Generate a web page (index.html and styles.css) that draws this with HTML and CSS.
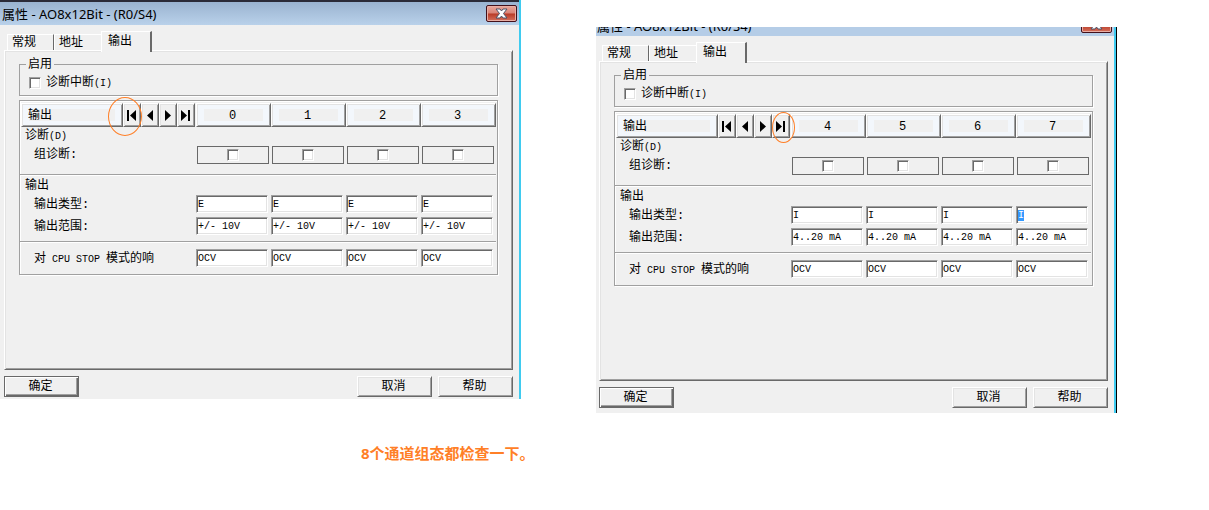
FILE: index.html
```
<!DOCTYPE html>
<html lang="zh-CN">
<head>
  <meta charset="UTF-8">
  <title>AO8x12Bit</title>
  <link rel="stylesheet" href="styles.css">
</head>
<body>

  <main class="dialogs">
    <section class="dialog" id="firstDialog"></section>
    <section class="dialog cropped" id="secondDialog"></section>
  </main>

  <p class="note">8个通道组态都检查一下。</p>

  <script src="script.js"></script>
</body>
</html>
```
FILE: styles.css
```
* {
  box-sizing: border-box;
}
body {
  margin: 0;
  background: #fff;
  color: #000;
  font-family: "Liberation Mono", "Noto Sans CJK SC", monospace;
  font-size: 12px;
  line-height: 16px;
}
button, input {
  margin: 0;
  padding: 0;
  color: inherit;
  font: inherit;
}
.latin {
  font-size: 10px;
}

/* dialogs */
.dialogs {
  display: grid;
  grid-template-columns: 1fr 1fr;
  align-items: start;
  gap: 75px;
  padding-right: 92px;
}
.dialog {
  min-width: 0;
  background: #f0f0f0;
  box-shadow: inset -2px 0 0 #3fcbf0;
}
.title {
  display: flex;
  justify-content: space-between;
  align-items: center;
  height: 25px;
  margin-right: 2px;
  padding: 0 2px;
  border-top: 2px solid #2b2b38;
  background: linear-gradient(#9ab3d0, #b9d1ea);
}
.title h1 {
  margin: 0;
  font: 13px/22px "Noto Sans", "Noto Sans CJK SC", sans-serif;
}
.close {
  display: flex;
  justify-content: center;
  align-items: center;
  flex: none;
  width: 31px;
  height: 17px;
  border: 1px solid #43101a;
  border-radius: 2px;
  background: linear-gradient(#e9a79c, #d98376 48%, #b93a26 52%, #d4705c);
  box-shadow: inset 0 0 0 1px #e8aea5;
}
.content {
  padding: 6px 8px 2px 4px;
}

/* second window is cut off at the top */
.cropped {
  margin-top: 27px;
  border-right: 1px solid #000;
}
.cropped .title {
  align-items: flex-end;
  height: 9px;
  padding-left: 1px;
  border-top: 0;
  background: #b5cde7;
  overflow: hidden;
}
.cropped .title h1 {
  line-height: 20px;
}
.cropped .close {
  margin-bottom: 3px;
}
.cropped .content {
  padding: 6px 8px 5px 3px;
}

/* tabs */
.tabs {
  display: flex;
  align-items: flex-end;
  height: 19px;
  padding-left: 3px;
}
.tabs button {
  width: 47px;
  height: 16px;
  padding-left: 4px;
  border: 1px solid #fff;
  border-right: 1px solid #696969;
  border-bottom: 0;
  background: #f0f0f0;
  text-align: left;
  line-height: 16px;
}
.tabs button:nth-child(2) {
  border-right: 0;
}
.tabs .active {
  position: relative;
  width: 51px;
  height: 21px;
  margin-bottom: -2px;
  padding: 0 0 1px 6px;
  border-right: 2px solid #696969;
}
.panel {
  padding: 6px 14px 94px;
  border: 1px solid #fff;
  border-right-color: #696969;
  border-bottom-color: #696969;
  box-shadow: inset 1px 1px 0 #e3e3e3, inset -1px -1px 0 #a0a0a0;
}

/* enable group */
fieldset {
  position: relative;
  min-width: 0;
  margin: 0 0 4px;
  padding: 0 6px;
  border: 1px solid #a0a0a0;
  box-shadow: 1px 1px 0 #fff;
}
legend {
  height: 14px;
  padding: 0 2px;
  line-height: 16px;
}
.enable {
  display: flex;
  align-items: center;
  gap: 5px;
  height: 24px;
  padding-left: 3px;
}
.enable span {
  line-height: 18px;
}
input[type="checkbox"] {
  appearance: none;
  flex: none;
  width: 12px;
  height: 12px;
  border: 1px solid #a0a0a0;
  border-right-color: #fff;
  border-bottom-color: #fff;
  background: #fff;
  box-shadow: inset 1px 1px 0 #696969, inset -1px -1px 0 #e3e3e3;
}

/* channel table */
.channels {
  padding-right: 1px;
  border: 1px solid #a0a0a0;
  box-shadow: inset 1px 1px 0 #fff, 1px 1px 0 #fff;
}
table {
  width: 100%;
  table-layout: fixed;
  border-collapse: separate;
  border-spacing: 0;
}
th, td {
  height: 22px;
  padding: 0;
  font-weight: normal;
  text-align: left;
  vertical-align: top;
}
thead th {
  height: 26px;
  padding-top: 2px;
}
thead th:first-child {
  width: 176px;
  padding: 2px 1px 0;
}
.head {
  display: flex;
}
.raised, .nav button, .footer button {
  border: 1px solid #fff;
  border-right-color: #696969;
  border-bottom-color: #696969;
  background: #f0f0f0;
  box-shadow: inset 1px 1px 0 #e3e3e3, inset -1px -1px 0 #a0a0a0;
}
.raised {
  display: block;
  width: 100%;
  height: 24px;
  padding: 1px 2px 0 0;
  background: linear-gradient(#f0f0f0, #f0f0f0) center / calc(100% - 14px) 12px no-repeat, #f3f7fc;
}
.head .raised {
  flex: 1;
  min-width: 0;
  padding: 2px 0 0 6px;
  text-align: left;
}
.nav {
  display: flex;
}
.nav span {
  position: relative;
}
.nav button {
  display: flex;
  justify-content: center;
  align-items: center;
  width: 18px;
  height: 24px;
  padding-right: 1px;
}
.ring {
  position: absolute;
  z-index: 1;
  pointer-events: none;
  border: 1px solid #ff7f27;
  border-radius: 50%;
}
.ring-first {
  top: -6px;
  left: -15px;
  width: 34px;
  height: 39px;
}
.ring-last {
  top: -2px;
  left: 0;
  width: 23px;
  height: 31px;
}
tbody th {
  padding-left: 14px;
  line-height: 20px;
  white-space: nowrap;
}
.group th {
  height: 18px;
  padding-left: 5px;
  line-height: 18px;
}
.diagnosis th, .diagnosis td {
  height: 28px;
}
.diagnosis th {
  line-height: 18px;
}
.check {
  display: flex;
  justify-content: center;
  align-items: center;
  height: 18px;
  margin: 0 2px 0 1px;
  border: 1px solid #696969;
}
.line th, .line td {
  border-top: 1px solid #a0a0a0;
  box-shadow: inset 0 1px 0 #fff;
}
.group.line th {
  height: 21px;
  padding-top: 3px;
  line-height: 17px;
}
.range th, .range td {
  height: 24px;
}
.stop th, .stop td {
  height: 33px;
  padding-top: 7px;
}
td input[type="text"] {
  display: block;
  width: calc(100% - 3px);
  height: 18px;
  padding: 0;
  border: 1px solid #a0a0a0;
  border-right-color: #fff;
  border-bottom-color: #fff;
  background: #fff;
  box-shadow: inset 1px 1px 0 #696969, inset -1px -1px 0 #e3e3e3;
  font-size: 10px;
  text-indent: 1px;
  outline: 0;
}
td input::selection {
  background: #3399ff;
  color: #fff;
}

/* footer */
.footer {
  display: flex;
  gap: 6px;
  padding-top: 6px;
}
.footer button {
  width: 75px;
  height: 21px;
  padding-right: 2px;
  line-height: 18px;
}
.footer .default {
  margin-right: auto;
  border-color: #696969;
  box-shadow: inset 1px 1px 0 #fff, inset -1px -1px 0 #696969, inset -2px -2px 0 #a0a0a0;
}

.note {
  margin: 0;
  padding: 30px 0 0 361px;
  color: #ff7f27;
  font: bold 15px/20px "Noto Sans", "Noto Sans CJK SC", sans-serif;
}
```
FILE: script.js
```
const navIcons = {
  first: ['第一个', 'M1 1h2v11h-2zM10 1v11l-6 -5.5z'],
  prev: ['上一个', 'M9 1v11l-6 -5.5z'],
  next: ['下一个', 'M3 1v11l6 -5.5z'],
  last: ['最后一个', 'M1 1v11l6 -5.5zM8 1h2v11h-2z']
};

function navButtons(marked) {
  return Object.keys(navIcons).map(key => `
    <span>
      <button type="button" aria-label="${navIcons[key][0]}">
        <svg width="11" height="13" viewBox="0 0 11 13"><path d="${navIcons[key][1]}"/></svg>
      </button>
      ${key === marked ? `<i class="ring ring-${key}"></i>` : ''}
    </span>`).join('');
}

function textCells(channels, label, value) {
  return channels.map(n => `<td><input type="text" aria-label="${label} ${n}" value="${value}"></td>`).join('');
}

function renderDialog(id, channels, marked, type, range) {
  document.getElementById(id).innerHTML = `
    <header class="title">
      <h1>属性 - AO8x12Bit - (R0/S4)</h1>
      <button type="button" class="close" aria-label="关闭">
        <svg width="13" height="11" viewBox="0 0 13 11">
          <path d="M1 1h4l1.5 2 1.5-2h4l-3.5 4.5 3.5 4.5h-4l-1.5-2-1.5 2h-4l3.5-4.5z" fill="#fff" stroke="#4a5268"/>
        </svg>
      </button>
    </header>
    <div class="content">
      <nav class="tabs" role="tablist">
        <button type="button" role="tab">常规</button>
        <button type="button" role="tab">地址</button>
        <button type="button" role="tab" class="active" aria-selected="true">输出</button>
      </nav>
      <div class="panel">
        <fieldset>
          <legend>启用</legend>
          <label class="enable"><input type="checkbox"><span>诊断中断<span class="latin">(I)</span></span></label>
        </fieldset>
        <div class="channels">
          <table>
            <thead>
              <tr>
                <th>
                  <div class="head">
                    <button type="button" class="raised">输出</button>
                    <div class="nav">${navButtons(marked)}</div>
                  </div>
                </th>
                ${channels.map(n => `<th scope="col"><button type="button" class="raised">${n}</button></th>`).join('')}
              </tr>
            </thead>
            <tbody>
              <tr class="group"><th colspan="5">诊断<span class="latin">(D)</span></th></tr>
              <tr class="diagnosis">
                <th scope="row">组诊断:</th>
                ${channels.map(n => `<td><div class="check"><input type="checkbox" aria-label="组诊断 ${n}"></div></td>`).join('')}
              </tr>
              <tr class="group line"><th colspan="5">输出</th></tr>
              <tr class="type"><th scope="row">输出类型:</th>${textCells(channels, '输出类型', type)}</tr>
              <tr class="range"><th scope="row">输出范围:</th>${textCells(channels, '输出范围', range)}</tr>
              <tr class="line stop">
                <th scope="row">对<span class="latin"> CPU STOP </span>模式的响</th>
                ${textCells(channels, 'CPU STOP', 'OCV')}
              </tr>
            </tbody>
          </table>
        </div>
      </div>
      <div class="footer">
        <button type="button" class="default">确定</button>
        <button type="button">取消</button>
        <button type="button">帮助</button>
      </div>
    </div>`;
}

renderDialog('firstDialog', [0, 1, 2, 3], 'first', 'E', '+/- 10V');
renderDialog('secondDialog', [4, 5, 6, 7], 'last', 'I', '4..20 mA');

document.querySelector('#secondDialog .type td:last-child input').select();
```
